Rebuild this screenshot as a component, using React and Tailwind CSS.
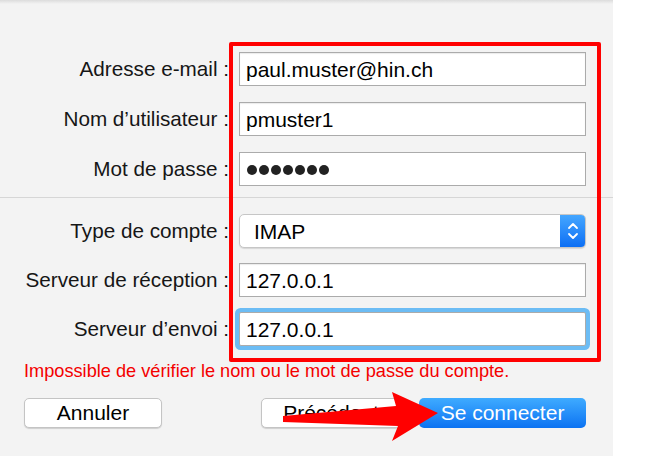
import React from "react";

const font = { fontFamily: '"Liberation Sans", Arial, sans-serif' };

const Label = ({ children }) => (
  <div className="flex items-center justify-end text-[20.7px] text-[#161616] whitespace-nowrap">
    {children}
  </div>
);

const TextInput = ({ value, focused }) => (
  <div
    className={
      "flex items-center h-[34px] bg-white border border-[#ababab] pl-[6px] pt-[2px] text-[21px] text-black " +
      (focused
        ? "rounded-[2px] shadow-[0_0_0_4px_#6cbcf4]"
        : "shadow-[inset_0_1px_1px_rgba(0,0,0,0.08)]")
    }
  >
    {value}
  </div>
);

const PasswordInput = ({ count }) => (
  <div className="flex items-center gap-[2px] h-[34px] bg-white border border-[#ababab] pl-[7px] pt-[2px]">
    {Array.from({ length: count }).map((_, i) => (
      <span key={i} className="w-[10px] h-[10px] rounded-full bg-[#222]" />
    ))}
  </div>
);

const Select = ({ value }) => (
  <div className="flex h-[34px] bg-white border border-[#c6c6c6] rounded-[5px] shadow-[0_1px_1px_rgba(0,0,0,0.12)] overflow-hidden">
    <div className="flex-1 flex items-center pl-[14px] pt-[1px] text-[21px] text-black">
      {value}
    </div>
    <div className="w-[25px] flex items-center justify-center bg-gradient-to-b from-[#44a6ff] to-[#0b6ef4]">
      <svg width="12" height="20" viewBox="0 0 12 20" fill="none" stroke="white" strokeWidth="1.8" strokeLinecap="round" strokeLinejoin="round">
        <path d="M2 7 L6 3 L10 7" />
        <path d="M2 13 L6 17 L10 13" />
      </svg>
    </div>
  </div>
);

const Button = ({ children, primary }) => (
  <button
    className={
      "h-[30px] rounded-[5px] text-[21px] flex items-center justify-center " +
      (primary
        ? "bg-gradient-to-b from-[#3fabff] to-[#0b72f2] text-white"
        : "bg-white border border-[#c4c4c4] text-black shadow-[0_1px_1px_rgba(0,0,0,0.15)]")
    }
  >
    {children}
  </button>
);

export default function App() {
  return (
    <div className="w-[646px] h-[456px] bg-white overflow-hidden" style={font}>
      <div className="relative w-[613px] h-full bg-[#f3f3f3]">
        <div className="h-[4px] bg-gradient-to-b from-[#dcdcdc] to-[#f3f3f3]" />

        <div className="pt-[48px] grid grid-cols-[229px_347px] gap-x-[10px] gap-y-[16px]">
          <Label>Adresse e-mail :</Label>
          <TextInput value="paul.muster@hin.ch" />
          <Label>Nom d’utilisateur :</Label>
          <TextInput value="pmuster1" />
          <Label>Mot de passe :</Label>
          <PasswordInput count={7} />
        </div>

        <div className="mt-[11px] h-px bg-[#d6d6d6]" />

        <div className="pt-[16px] grid grid-cols-[229px_347px] gap-x-[10px] gap-y-[15px]">
          <Label>Type de compte :</Label>
          <Select value="IMAP" />
          <Label>Serveur de réception :</Label>
          <TextInput value="127.0.0.1" />
          <Label>Serveur d’envoi :</Label>
          <TextInput value="127.0.0.1" focused />
        </div>

        <div className="mt-[14px] pl-[24px] h-[24px] flex items-center text-[18.2px] text-[#f40000]">
          Impossible de vérifier le nom ou le mot de passe du compte.
        </div>

        <div className="mt-[14px] flex pl-[24px]">
          <div className="w-[138px] flex flex-col">
            <Button>Annuler</Button>
          </div>
          <div className="ml-[99px] w-[140px] flex flex-col">
            <Button>Précédent</Button>
          </div>
          <div className="ml-[18px] w-[167px] flex flex-col">
            <Button primary>Se connecter</Button>
          </div>
        </div>

        {/* red annotation box */}
        <div className="absolute left-[229px] top-[42px] w-[372px] h-[320px] border-[4px] border-[#ff0000] rounded-[2px] pointer-events-none" />

        {/* red annotation arrow */}
        <svg className="absolute left-[280px] top-[388px]" width="165" height="58" viewBox="0 0 165 58">
          <polygon
            points="3,28 116,18 112,4 158,25 112,53 118,38 3,34"
            fill="#ff0000"
          />
        </svg>
      </div>
    </div>
  );
}
